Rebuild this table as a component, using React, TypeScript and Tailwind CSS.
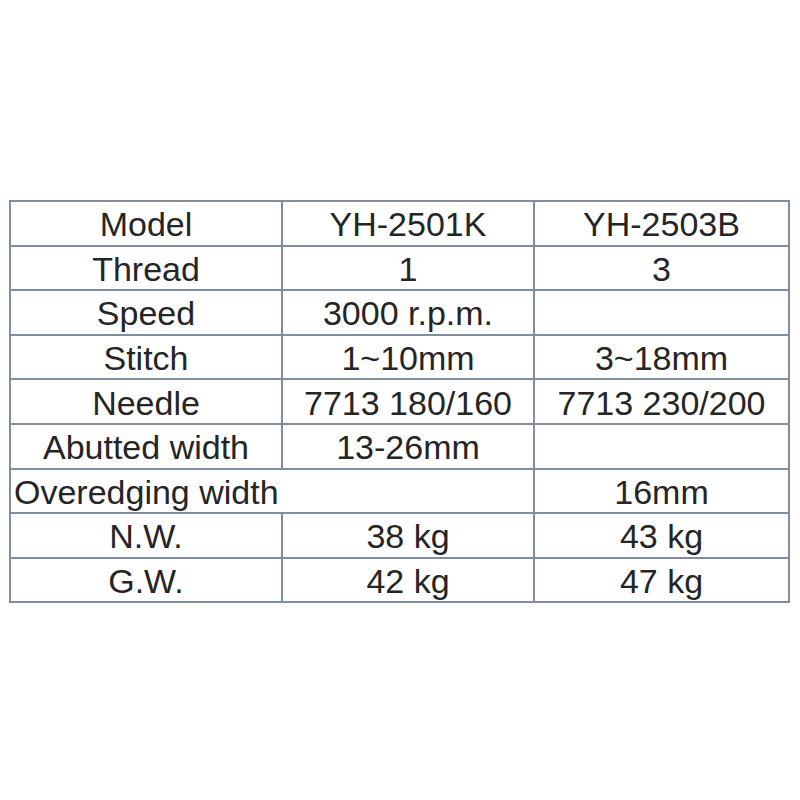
import React from "react";

type Cell = { text: string; span?: number; left?: boolean };

const rows: Cell[][] = [
  [{ text: "Model" }, { text: "YH-2501K" }, { text: "YH-2503B" }],
  [{ text: "Thread" }, { text: "1" }, { text: "3" }],
  [{ text: "Speed" }, { text: "3000 r.p.m." }, { text: "" }],
  [{ text: "Stitch" }, { text: "1~10mm" }, { text: "3~18mm" }],
  [{ text: "Needle" }, { text: "7713 180/160" }, { text: "7713 230/200" }],
  [{ text: "Abutted width" }, { text: "13-26mm" }, { text: "" }],
  [{ text: "Overedging width", span: 2, left: true }, { text: "16mm" }],
  [{ text: "N.W." }, { text: "38 kg" }, { text: "43 kg" }],
  [{ text: "G.W." }, { text: "42 kg" }, { text: "47 kg" }],
];

export default function App() {
  return (
    <div className="w-[800px] h-[800px] bg-white pt-[200px] pl-[9px]">
      <div
        className="grid w-[781px] grid-cols-[270px_250px_253px] grid-rows-[repeat(9,42.6px)] gap-[2px] p-[2px] bg-[#7f8ea0] text-[34px] leading-none text-[#252525]"
        style={{ fontFamily: '"Liberation Sans", Arial, sans-serif' }}
      >
        {rows.map((r, i) =>
          r.map((c, j) => (
            <div
              key={`${i}-${j}`}
              className={
                c.span === 2
                  ? "col-span-2 flex items-center justify-start pl-[3px] bg-white whitespace-nowrap"
                  : "flex items-center justify-center bg-white whitespace-nowrap"
              }
            >
              <span className="pt-[2px]">{c.text}</span>
            </div>
          ))
        )}
      </div>
    </div>
  );
}
